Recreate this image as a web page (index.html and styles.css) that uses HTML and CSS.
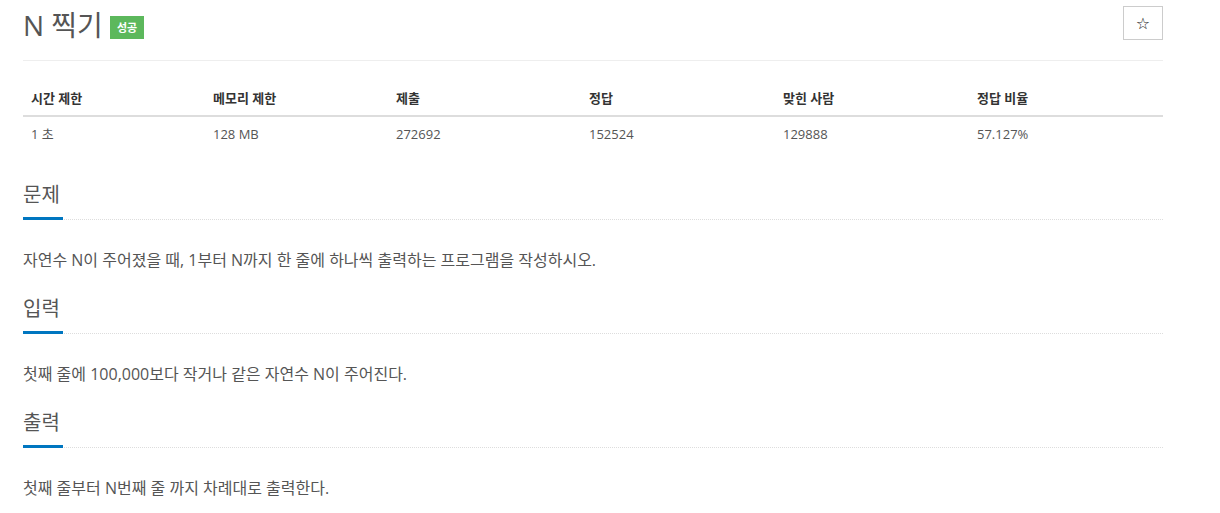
FILE: index.html
```html
<!DOCTYPE html>
<html lang="ko">
<head>
<meta charset="utf-8">
<title>N 찍기</title>
<link rel="stylesheet" href="styles.css">
</head>
<body>
<div class="container">
  <div class="page-header">
    <h1 class="title"><span>N 찍기</span><span class="label-success">성공</span></h1>
    <button class="star-btn" type="button">☆</button>
  </div>
  <table class="info">
    <thead>
      <tr><th>시간 제한</th><th>메모리 제한</th><th>제출</th><th>정답</th><th>맞힌 사람</th><th>정답 비율</th></tr>
    </thead>
    <tbody>
      <tr><td>1 초</td><td>128 MB</td><td>272692</td><td>152524</td><td>129888</td><td>57.127%</td></tr>
    </tbody>
  </table>
  <section class="problem-section">
    <div class="headline"><h2>문제</h2></div>
    <p class="problem-text">자연수 N이 주어졌을 때, 1부터 N까지 한 줄에 하나씩 출력하는 프로그램을 작성하시오.</p>
  </section>
  <section class="problem-section">
    <div class="headline"><h2>입력</h2></div>
    <p class="problem-text">첫째 줄에 100,000보다 작거나 같은 자연수 N이 주어진다.</p>
  </section>
  <section class="problem-section">
    <div class="headline"><h2>출력</h2></div>
    <p class="problem-text">첫째 줄부터 N번째 줄 까지 차례대로 출력한다.</p>
  </section>
</div>
</body>
</html>
```
FILE: styles.css
```css
html, body {
  margin: 0;
  padding: 0;
  background: #fff;
}
body {
  font-family: "Open Sans", "Noto Sans CJK KR", sans-serif;
  color: #555;
  font-size: 13px;
}
.container {
  width: 1140px;
  padding-left: 23px;
}
.page-header {
  display: flex;
  justify-content: space-between;
  align-items: flex-start;
  padding-top: 6px;
  padding-bottom: 16px;
  border-bottom: 1px solid #eee;
}
.title {
  margin: 0;
  font-size: 28px;
  font-weight: 400;
  line-height: 38px;
  color: #555;
  display: flex;
  align-items: center;
  gap: 7px;
}
.label-success {
  display: inline-block;
  background: #5cb85c;
  color: #fff;
  font-size: 11px;
  font-weight: 700;
  line-height: 15px;
  padding: 4px 7px 4px;
  margin-top: 5px;
}
.star-btn {
  width: 40px;
  height: 34px;
  border: 1px solid #ccc;
  background: #fff;
  font-size: 16px;
  color: #222;
  padding: 0;
  font-family: "DejaVu Sans", sans-serif;
}
.info {
  width: 1140px;
  table-layout: fixed;
  border-collapse: collapse;
  margin-top: 20px;
  margin-bottom: 30px;
}
.info th, .info td {
  text-align: left;
  padding: 8px;
  font-size: 13px;
  line-height: 18px;
}
.info th {
  color: #333;
  font-weight: 700;
  border-bottom: 2px solid #ddd;
}
.info td {
  color: #555;
}
.info th:nth-child(1) { width: 166px; }
.info th:nth-child(2) { width: 167px; }
.info th:nth-child(3) { width: 177px; }
.info th:nth-child(4) { width: 178px; }
.info th:nth-child(5) { width: 178px; }
.info th:nth-child(6) { width: 178px; }
.problem-section {
  margin-top: 23px;
}
.headline {
  border-bottom: 1px dotted #ddd;
}
.headline h2 {
  display: inline-block;
  margin: 0 0 -1px;
  font-size: 20px;
  font-weight: 400;
  line-height: 28px;
  padding-bottom: 8px;
  border-bottom: 3px solid #0076c0;
  color: #555;
  min-width: 40px;
}
.problem-text {
  margin: 28px 0 0;
  font-size: 16px;
  line-height: 24px;
  color: #555;
}
```
